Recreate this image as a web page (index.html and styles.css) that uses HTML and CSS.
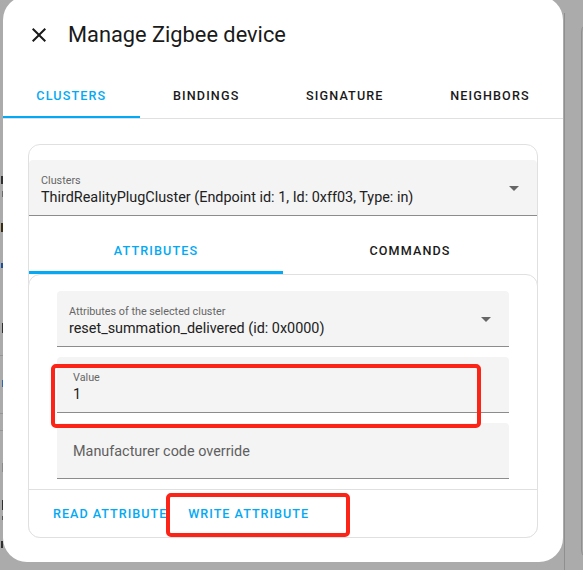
FILE: index.html
```html
<!DOCTYPE html>
<html lang="en">
<head>
<meta charset="utf-8">
<title>Manage Zigbee device</title>
<link rel="stylesheet" href="styles.css">
</head>
<body>
<div class="screen">
  <div class="under-left">
    <span class="bit b1"></span>
    <span class="bit b2"></span>
    <span class="bit b3"></span>
    <span class="bit b4"></span>
    <span class="bit b5"></span>
    <span class="rule r1"></span>
    <span class="bit b6"></span>
    <span class="rule r2"></span>
    <span class="rule r3"></span>
    <span class="bit b7"></span>
    <span class="bit b8"></span>
    <span class="bit b9"></span>
    <span class="bit b10"></span>
  </div>

  <div class="dialog">
    <header class="dlg-header">
      <button class="icon-btn" aria-label="Close">
        <svg viewBox="0 0 24 24" width="24" height="24"><path d="M19,6.41L17.59,5L12,10.59L6.41,5L5,6.41L10.59,12L5,17.59L6.41,19L12,13.41L17.59,19L19,17.59L13.41,12L19,6.41Z"/></svg>
      </button>
      <h1 class="dlg-title">Manage Zigbee device</h1>
    </header>

    <nav class="tabs main-tabs">
      <div class="tab active">Clusters</div>
      <div class="tab">Bindings</div>
      <div class="tab">Signature</div>
      <div class="tab">Neighbors</div>
    </nav>

    <div class="dlg-content">
      <section class="card">
        <div class="field select cluster-select">
          <div class="field-label">Clusters</div>
          <div class="field-value">ThirdRealityPlugCluster (Endpoint id: 1, Id: 0xff03, Type: in)</div>
          <span class="arrow"></span>
        </div>

        <nav class="tabs sub-tabs">
          <div class="tab active">Attributes</div>
          <div class="tab">Commands</div>
        </nav>

        <section class="card inner-card">
          <div class="fields">
            <div class="field select">
              <div class="field-label">Attributes of the selected cluster</div>
              <div class="field-value">reset_summation_delivered (id: 0x0000)</div>
              <span class="arrow"></span>
            </div>
            <div class="field text">
              <div class="field-label">Value</div>
              <div class="field-value">1</div>
            </div>
            <div class="field text empty">
              <div class="field-placeholder">Manufacturer code override</div>
            </div>
          </div>
          <div class="actions">
            <button class="text-btn">Read attribute</button>
            <button class="text-btn">Write attribute</button>
          </div>
        </section>
      </section>
    </div>
  </div>

  <div class="under-right">
    <span class="edge-line"></span>
    <span class="under-card"></span>
  </div>

  <div class="mark mark-value"></div>
  <div class="mark mark-write"></div>
</div>
</body>
</html>
```

FILE: styles.css
```css
* { box-sizing: border-box; }

html, body {
  margin: 0;
  padding: 0;
  width: 583px;
  height: 570px;
  overflow: hidden;
  background: #ababab;
  font-family: Roboto, "Noto Sans", "Liberation Sans", sans-serif;
}

.screen {
  position: relative;
  display: flex;
  width: 583px;
  height: 570px;
}

/* page content peeking out under the backdrop */
.under-left {
  width: 3px;
  flex: none;
  position: relative;
  overflow: hidden;
}
.bit {
  position: absolute;
  right: 0;
  width: 2px;
  background: #303030;
}
.b1 { top: 176px; height: 8px; }
.b2 { top: 191px; height: 6px; background: #6a6a6a; width: 1px; }
.b3 { top: 223px; height: 9px; background: #3a2a10; }
.b4 { top: 263px; height: 5px; background: #1c4d9a; }
.b5 { top: 323px; height: 10px; width: 1px; }
.b6 { top: 380px; height: 7px; background: #2a66b4; width: 1px; }
.b7 { top: 463px; height: 9px; background: #8a8a8a; width: 1px; }
.b8 { top: 500px; height: 10px; width: 1px; }
.b9 { top: 516px; height: 4px; background: #555; width: 1px; }
.b10 { top: 541px; height: 7px; }
.rule {
  position: absolute;
  left: 0;
  width: 3px;
  height: 1px;
  background: #959595;
}
.r1 { top: 355px; }
.r2 { top: 413px; }
.r3 { top: 430px; }

.under-right {
  flex: 1;
  position: relative;
}
.edge-line {
  position: absolute;
  left: 1px;
  top: 13px;
  bottom: 0;
  width: 1px;
  background: #8f8f8f;
}
.under-card {
  position: absolute;
  left: 18px;
  top: 22px;
  width: 20px;
  height: 538px;
  border: 1px solid #8f8f8f;
  border-radius: 10px;
}

/* dialog */
.dialog {
  flex: none;
  width: 560px;
  height: 566px;
  margin-top: -4px;
  background: #fff;
  border-radius: 24px;
  display: flex;
  flex-direction: column;
  overflow: hidden;
}

.dlg-header {
  display: flex;
  align-items: center;
  height: 74px;
  padding: 4px 0 0 24px;
  flex: none;
}
.icon-btn {
  width: 24px;
  height: 24px;
  padding: 0;
  border: 0;
  background: none;
  display: flex;
  align-items: center;
  justify-content: center;
}
.icon-btn svg { fill: #1a1a1a; }
.dlg-title {
  margin: 0 0 0 17px;
  font-size: 21.8px;
  font-weight: 400;
  color: #1a1a1a;
  line-height: 28px;
}

.tabs {
  display: flex;
  flex: none;
}
.tab {
  flex: 1 1 auto;
  display: flex;
  align-items: center;
  justify-content: center;
  height: 48px;
  font-size: 12.6px;
  font-weight: 500;
  letter-spacing: 1.125px;
  text-transform: uppercase;
  color: #1a1a1a;
  border-bottom: 2px solid transparent;
}
.tab.active {
  color: #03a9f4;
  border-bottom-color: #03a9f4;
}
.main-tabs {
  border-bottom: 1px solid #e0e0e0;
}
.main-tabs .tab { padding-top: 4px; }

.dlg-content {
  flex: 1;
  padding: 25px 25px 0;
}

.card {
  border: 1px solid #e0e0e0;
  border-radius: 12px;
  background: #fff;
}
.card > .cluster-select { margin-top: 15px; }

.field {
  position: relative;
  height: 56px;
  background: #f4f4f4;
  border-radius: 4px 4px 0 0;
  border-bottom: 1px solid #8c8c8c;
  padding: 0 40px 0 16px;
}
.field.select { padding-left: 12px; }
.field-label {
  padding-top: 14px;
  font-size: 10.8px;
  line-height: 13px;
  color: #666;
}
.field-value {
  margin-top: 2px;
  font-size: 14.4px;
  line-height: 18px;
  color: #212121;
  white-space: nowrap;
}
.field-placeholder {
  padding-top: 20px;
  font-size: 14.4px;
  line-height: 18px;
  color: #5f5f5f;
}
.arrow {
  position: absolute;
  right: 18px;
  top: 26px;
  width: 0;
  height: 0;
  border-left: 5px solid transparent;
  border-right: 5px solid transparent;
  border-top: 5px solid #666;
}

.sub-tabs {
  margin-top: 9px;
}
.sub-tabs .tab { flex: 1 1 0; height: 49px; padding-top: 5px; border-bottom-width: 3px; }

.inner-card {
  margin: 0 -1px -1px;
}
.fields {
  display: flex;
  flex-direction: column;
  gap: 10px;
  padding: 16px 28px 10px;
  border-bottom: 1px solid #e0e0e0;
}

.actions {
  display: flex;
  align-items: center;
  gap: 5px;
  height: 47px;
  padding: 0 16px;
}
.text-btn {
  border: 0;
  background: none;
  padding: 0 8px;
  height: 36px;
  font-family: inherit;
  font-size: 12.6px;
  font-weight: 500;
  letter-spacing: 1px;
  text-transform: uppercase;
  color: #03a9f4;
}

/* red annotation boxes drawn over the screenshot */
.mark {
  position: absolute;
  border: 4px solid #fb2416;
  border-radius: 5px;
}
.mark-value { left: 51px; top: 364px; width: 430px; height: 64px; }
.mark-write { left: 166px; top: 493px; width: 184px; height: 44px; }
```
